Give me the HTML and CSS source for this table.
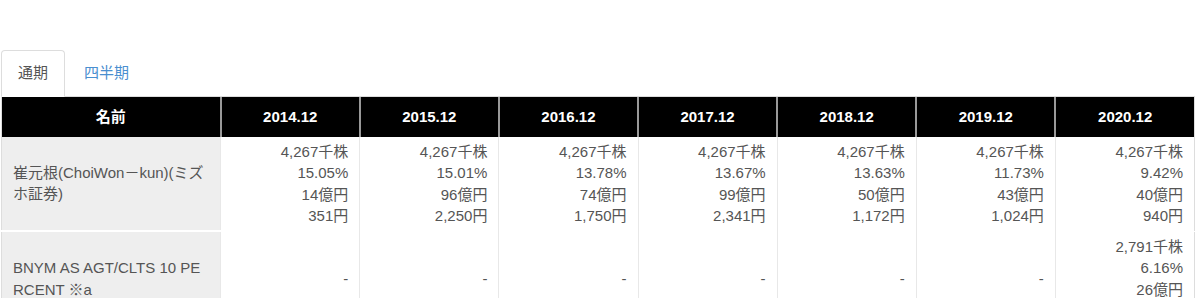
FILE: index.html
```html
<!DOCTYPE html>
<html lang="ja">
<head>
<meta charset="utf-8">
<title>大株主</title>
<link rel="stylesheet" href="styles.css">
</head>
<body>
<div class="wrap">
  <ul class="tabs">
    <li class="tab active"><a>通期</a></li>
    <li class="tab"><a>四半期</a></li>
  </ul>
  <table class="holders">
    <colgroup>
      <col class="c-name">
      <col class="c-year"><col class="c-year"><col class="c-year"><col class="c-year"><col class="c-year"><col class="c-year"><col class="c-year">
    </colgroup>
    <thead>
      <tr>
        <th>名前</th><th>2014.12</th><th>2015.12</th><th>2016.12</th><th>2017.12</th><th>2018.12</th><th>2019.12</th><th>2020.12</th>
      </tr>
    </thead>
    <tbody>
      <tr>
        <td class="name">崔元根(ChoiWon－kun)(ミズホ証券)</td>
        <td>4,267千株<br>15.05%<br>14億円<br>351円</td>
        <td>4,267千株<br>15.01%<br>96億円<br>2,250円</td>
        <td>4,267千株<br>13.78%<br>74億円<br>1,750円</td>
        <td>4,267千株<br>13.67%<br>99億円<br>2,341円</td>
        <td>4,267千株<br>13.63%<br>50億円<br>1,172円</td>
        <td>4,267千株<br>11.73%<br>43億円<br>1,024円</td>
        <td>4,267千株<br>9.42%<br>40億円<br>940円</td>
      </tr>
      <tr>
        <td class="name">BNYM AS AGT/CLTS 10 PERCENT ※a</td>
        <td>-</td><td>-</td><td>-</td><td>-</td><td>-</td><td>-</td>
        <td>2,791千株<br>6.16%<br>26億円<br>940円</td>
      </tr>
    </tbody>
  </table>
</div>
</body>
</html>
```
FILE: styles.css
```css
html, body {
  margin: 0;
  padding: 0;
  background: #fff;
}
body {
  font-family: "Liberation Sans", "Noto Sans CJK JP", sans-serif;
  font-size: 15px;
  line-height: 21.5px;
  color: #555;
}
.wrap {
  padding: 50px 5px 0 1px;
}
.tabs {
  list-style: none;
  margin: 0;
  padding: 0;
  display: flex;
  border-bottom: 1px solid #ddd;
}
.tab {
  margin-right: 2px;
  margin-bottom: -1px;
}
.tab a {
  display: block;
  padding: 11px 16px 12px;
  border: 1px solid transparent;
  border-radius: 4px 4px 0 0;
  color: #4a8fd0;
  cursor: pointer;
}
.tab.active a {
  color: #555;
  background: #fff;
  border-color: #ddd;
  border-bottom-color: #fff;
}
.holders {
  width: 1194px;
  table-layout: fixed;
  border-collapse: collapse;
  border: 1px solid #ddd;
  border-top: 0;
}
.c-name { width: 219px; }
.c-year { width: 139px; }
.holders th {
  background: #000;
  color: #fff;
  font-weight: bold;
  text-align: center;
  padding: 9px 8px;
  border-left: 2px solid #999;
  height: 22px;
}
.holders th:first-child {
  border-left: 0;
}
.holders td {
  text-align: right;
  vertical-align: middle;
  padding: 4px 11px 4px 8px;
  border-left: 1px solid #e8e8e8;
  border-top: 1px solid #fff;
}
.holders td.name {
  text-align: left;
  background: #eee;
  padding: 4px 13px 4px 11px;
  border-left: 0;
  border-top: 2px solid #fff;
  word-break: break-all;
}
.holders tbody tr:first-child td {
  border-top: 0;
}
```
